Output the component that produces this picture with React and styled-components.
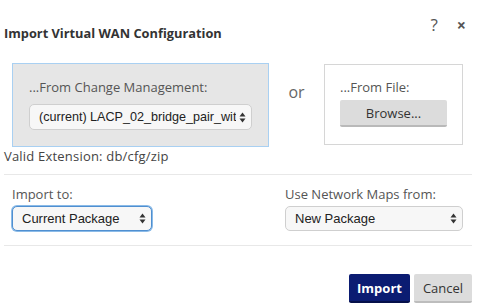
import React from "react";
import styled, { createGlobalStyle } from "styled-components";

const GlobalStyle = createGlobalStyle`
  html, body {
    margin: 0;
    padding: 0;
    background: #fff;
  }
  body {
    font-family: "Open Sans", "Liberation Sans", sans-serif;
    color: #555;
  }
`;

const Dialog = styled.div`
  width: 481px;
  height: 308px;
  box-sizing: border-box;
  padding: 0 9px 0 4px;
  display: flex;
  flex-direction: column;
`;

const Header = styled.div`
  display: flex;
  justify-content: space-between;
  align-items: flex-start;
  height: 63px;
`;

const Title = styled.h1`
  margin: 25px 0 0;
  font-size: 12.8px;
  line-height: 16px;
  font-weight: 700;
  color: #333;
`;

const HeaderTools = styled.div`
  display: flex;
  align-items: baseline;
  gap: 19px;
  margin: 17px 6px 0 0;
`;

const ToolButton = styled.span`
  font-size: ${(p) => p.size || 14}px;
  line-height: 16px;
  font-weight: ${(p) => (p.bold ? 700 : 400)};
  color: #555;
  cursor: pointer;
`;

const SourceRow = styled.div`
  display: flex;
  align-items: flex-start;
  margin-left: 8px;
`;

const SourceBox = styled.div`
  box-sizing: border-box;
  width: ${(p) => p.w}px;
  height: ${(p) => p.h}px;
  margin-top: ${(p) => p.top || 0}px;
  background: ${(p) => (p.active ? "#e6e6e6" : "#fff")};
  border: 1px solid ${(p) => (p.active ? "#a9d0f2" : "#d6d6d6")};
  padding: ${(p) => p.pad};
  display: flex;
  flex-direction: column;
`;

const BoxLabel = styled.div`
  font-size: 13px;
  line-height: 18px;
  color: #555;
  margin-bottom: ${(p) => p.gap}px;
`;

const Or = styled.div`
  width: 55px;
  text-align: center;
  font-size: 16px;
  line-height: 20px;
  color: #666;
  margin-top: 19px;
`;

const SelectBox = styled.div`
  box-sizing: border-box;
  width: ${(p) => p.w}px;
  height: ${(p) => p.h || 25}px;
  display: flex;
  align-items: center;
  justify-content: space-between;
  gap: 3px;
  padding: 0 5px 0 ${(p) => p.padLeft || 9}px;
  background: #f7f7f7;
  border: 1px solid ${(p) => (p.focused ? "#4f8fd0" : "#cfcfcf")};
  box-shadow: ${(p) => (p.focused ? "0 0 0 1px #8bbbe8" : "none")};
  border-radius: 5px;
  font-family: "Liberation Sans", Arial, sans-serif;
  font-size: ${(p) => p.fs || 13}px;
  color: #222;
`;

const SelectText = styled.span`
  white-space: nowrap;
  overflow: hidden;
  flex: 1;
`;

const Arrows = () => (
  <svg width="7" height="11" viewBox="0 0 7 11">
    <path d="M3.5 0.5 L6.5 4.5 L0.5 4.5 Z" fill="#333" />
    <path d="M3.5 10.5 L6.5 6.5 L0.5 6.5 Z" fill="#333" />
  </svg>
);

const BrowseButton = styled.div`
  box-sizing: border-box;
  width: 107px;
  height: 27px;
  background: #dcdcdc;
  border-bottom: 2px solid #b9b9b9;
  border-radius: 2px;
  display: flex;
  align-items: center;
  justify-content: center;
  font-size: 13px;
  color: #333;
`;

const Note = styled.div`
  font-size: 13px;
  letter-spacing: 0.2px;
  line-height: 16px;
  color: #444;
  margin-top: 1px;
`;

const Divider = styled.div`
  height: 1px;
  background: #e8e8e8;
  margin: ${(p) => p.m};
`;

const Settings = styled.div`
  box-sizing: border-box;
  display: flex;
  justify-content: space-between;
  padding: 0 0 0 8px;
  width: 459px;
`;

const Field = styled.div`
  display: flex;
  flex-direction: column;
`;

const FieldLabel = styled.div`
  font-size: 13px;
  line-height: 18px;
  color: #555;
  margin: 1px 0 3px;
`;

const Footer = styled.div`
  display: flex;
  justify-content: flex-end;
  gap: 4px;
  margin-top: 28px;
`;

const Button = styled.div`
  box-sizing: border-box;
  height: 29px;
  width: ${(p) => p.w}px;
  display: flex;
  align-items: center;
  justify-content: center;
  border-radius: 2px;
  font-size: 13px;
  background: ${(p) => (p.primary ? "#0b1c72" : "#dcdcdc")};
  color: ${(p) => (p.primary ? "#fff" : "#333")};
  font-weight: ${(p) => (p.primary ? 700 : 400)};
  border-bottom: 2px solid ${(p) => (p.primary ? "#06104a" : "#bdbdbd")};
`;

export default function App() {
  return (
    <>
      <GlobalStyle />
      <Dialog>
        <Header>
          <Title>Import Virtual WAN Configuration</Title>
          <HeaderTools>
            <ToolButton size={17}>?</ToolButton>
            <ToolButton size={16} bold>×</ToolButton>
          </HeaderTools>
        </Header>
        <SourceRow>
          <SourceBox active w={257} h={84} pad="14px 0 0 16px">
            <BoxLabel gap={8}>...From Change Management:</BoxLabel>
            <SelectBox w={223} h={26} fs={12.6}>
              <SelectText>(current) LACP_02_bridge_pair_with</SelectText>
              <Arrows />
            </SelectBox>
          </SourceBox>
          <Or>or</Or>
          <SourceBox w={139} h={81} top={1} pad="13px 0 0 15px">
            <BoxLabel gap={4}>...From File:</BoxLabel>
            <BrowseButton>Browse...</BrowseButton>
          </SourceBox>
        </SourceRow>
        <Note>Valid Extension: db/cfg/zip</Note>
        <Divider m="10px 0 9px" />
        <Settings>
          <Field>
            <FieldLabel>Import to:</FieldLabel>
            <SelectBox w={140} focused>
              <SelectText>Current Package</SelectText>
              <Arrows />
            </SelectBox>
          </Field>
          <Field>
            <FieldLabel>Use Network Maps from:</FieldLabel>
            <SelectBox w={178}>
              <SelectText>New Package</SelectText>
              <Arrows />
            </SelectBox>
          </Field>
        </Settings>
        <Divider m="14px 0 0" />
        <Footer>
          <Button primary w={61}>Import</Button>
          <Button w={58}>Cancel</Button>
        </Footer>
      </Dialog>
    </>
  );
}
